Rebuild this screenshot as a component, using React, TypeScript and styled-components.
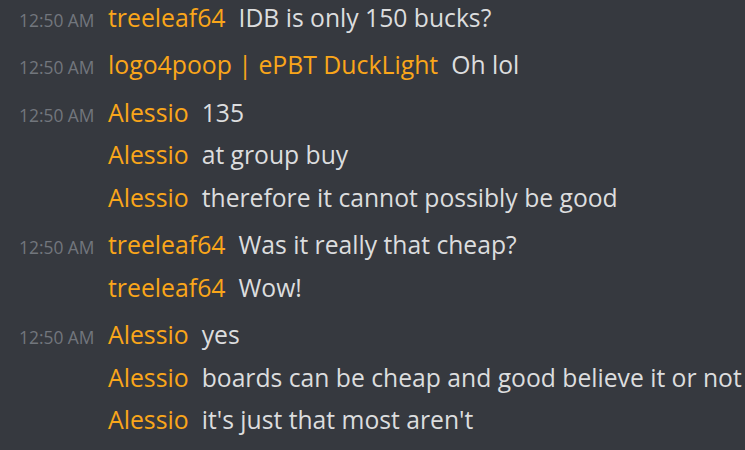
import React from "react";
import styled, { createGlobalStyle } from "styled-components";

const Global = createGlobalStyle`
  html, body { margin: 0; padding: 0; background: #36393f; }
  body { width: 745px; height: 450px; overflow: hidden; }
`;

const Chat = styled.div`
  display: flex;
  flex-direction: column;
  width: 745px;
  height: 450px;
  background: #36393f;
  box-sizing: border-box;
  font-family: "Open Sans", "Noto Sans", sans-serif;
`;

const Group = styled.div`
  display: flex;
  flex-direction: column;
  padding-top: 4.7px;
  &:first-child { padding-top: 0; }
`;

const Line = styled.div`
  display: grid;
  grid-template-columns: 108px auto 1fr;
  align-items: baseline;
  height: 42.6px;
  line-height: 34px;
  white-space: nowrap;
`;

const Stamp = styled.span`
  padding-left: 19px;
  font-size: 17.4px;
  color: #72767d;
`;

const Name = styled.span`
  font-size: 24.8px;
  color: #faa61a;
  margin-right: 13px;
`;

const Text = styled.span`
  font-size: 24.7px;
  color: #dcddde;
`;

type Msg = { name: string; text: string };
const groups: Msg[][] = [
  [{ name: "treeleaf64", text: "IDB is only 150 bucks?" }],
  [{ name: "logo4poop | ePBT DuckLight", text: "Oh lol" }],
  [
    { name: "Alessio", text: "135" },
    { name: "Alessio", text: "at group buy" },
    { name: "Alessio", text: "therefore it cannot possibly be good" },
  ],
  [
    { name: "treeleaf64", text: "Was it really that cheap?" },
    { name: "treeleaf64", text: "Wow!" },
  ],
  [
    { name: "Alessio", text: "yes" },
    { name: "Alessio", text: "boards can be cheap and good believe it or not" },
    { name: "Alessio", text: "it's just that most aren't" },
  ],
];

export default function App() {
  return (
    <>
      <Global />
      <Chat>
        {groups.map((g, gi) => (
          <Group key={gi}>
            {g.map((m, i) => (
              <Line key={i}>
                <Stamp>{i === 0 ? "12:50 AM" : ""}</Stamp>
                <Name>{m.name}</Name>
                <Text>{m.text}</Text>
              </Line>
            ))}
          </Group>
        ))}
      </Chat>
    </>
  );
}
